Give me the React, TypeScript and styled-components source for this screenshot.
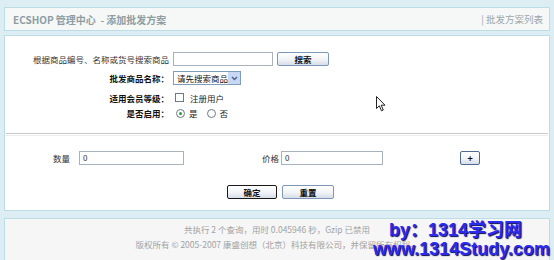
import styled, { createGlobalStyle } from "styled-components";

const GlobalStyle = createGlobalStyle`
  html, body {
    margin: 0;
    padding: 0;
    background: #dcedf4;
    font-family: "Noto Sans CJK SC", "Noto Sans", sans-serif;
    font-size: 8.5px;
    color: #222;
  }
`;

const Page = styled.div`
  position: relative;
  width: 554px;
  height: 260px;
  overflow: hidden;
  padding: 7px 4px 0;
  box-sizing: border-box;
`;

const Header = styled.div`
  height: 24px;
  box-sizing: border-box;
  border: 1px solid #bcdce6;
  background: #f6f7f7;
  display: flex;
  align-items: center;
  justify-content: space-between;
  padding: 0 6px 0 8px;
`;

const Title = styled.span`
  font-size: 10px;
  font-weight: bold;
  color: #8d9da2;
  white-space: pre;
`;

const ActionLink = styled.span`
  font-size: 9.5px;
  color: #9aa7ab;
  white-space: pre;
`;

const Main = styled.div`
  margin-top: 4px;
  background: #fff;
  border: 1px solid #bcdce6;
  padding: 14px 0 11px;
`;

const FormGrid = styled.div`
  display: grid;
  grid-template-columns: 164px 1fr;
  column-gap: 4px;
`;

const Label = styled.div<{ $bold?: boolean; $h: number }>`
  height: ${(p) => p.$h}px;
  display: flex;
  align-items: center;
  justify-content: flex-end;
  font-weight: ${(p) => (p.$bold ? "bold" : "normal")};
  color: ${(p) => (p.$bold ? "#111" : "#333")};
  white-space: nowrap;
`;

const Cell = styled.div<{ $h: number }>`
  height: ${(p) => p.$h}px;
  display: flex;
  align-items: center;
  gap: 4px;
`;

const TextInput = styled.div<{ $w: number }>`
  width: ${(p) => p.$w}px;
  flex: none;
  height: 14px;
  box-sizing: border-box;
  border: 1px solid #a7b2bb;
  background: #fff;
  font-size: 8px;
  line-height: 12px;
  padding-left: 3px;
  color: #333;
`;

const Button = styled.div<{ $w: number; $dark?: boolean }>`
  width: ${(p) => p.$w}px;
  flex: none;
  height: 14px;
  box-sizing: border-box;
  border: 1px solid ${(p) => (p.$dark ? "#1a1a1a" : "#7d97b8")};
  border-radius: 2px;
  background: linear-gradient(#ffffff 0%, #f1f3f6 55%, #d6dde8 100%);
  display: flex;
  align-items: center;
  justify-content: center;
  font-weight: bold;
  font-size: 8.5px;
  color: #111;
`;

const Select = styled.div`
  width: 68px;
  height: 14px;
  box-sizing: border-box;
  border: 1px solid #7f9db9;
  display: flex;
  align-items: center;
  justify-content: space-between;
  padding-left: 3px;
  font-size: 8.5px;
  color: #111;
`;

const SelectArrow = styled.div`
  width: 12px;
  height: 12px;
  background: #c8d7f4;
  display: flex;
  align-items: center;
  justify-content: center;
`;

const CheckBox = styled.span`
  width: 9px;
  height: 9px;
  box-sizing: border-box;
  border: 1px solid #6d7a86;
  background: #fff;
  margin-left: 2px;
  margin-right: 2px;
`;

const Radio = styled.span<{ $checked?: boolean }>`
  width: 9px;
  height: 9px;
  box-sizing: border-box;
  border: 1px solid #6d7a86;
  border-radius: 50%;
  background: #fff;
  display: flex;
  align-items: center;
  justify-content: center;
  margin-left: 3px;
  &::after {
    content: "";
    width: 3px;
    height: 3px;
    border-radius: 50%;
    background: ${(p) => (p.$checked ? "#2f9b2f" : "transparent")};
  }
`;

const OptionText = styled.span<{ $gap?: number }>`
  margin-right: ${(p) => p.$gap ?? 0}px;
  color: #222;
`;

const Separator = styled.div`
  margin: 14px 1px 0;
  height: 1px;
  border-top: 1px solid #c9c9c9;
  border-bottom: 1px solid #ececec;
`;

const PriceRow = styled.div`
  margin-top: 15px;
  height: 14px;
  display: flex;
  align-items: center;
  padding-left: 48px;
`;

const FieldLabel = styled.span<{ $ml?: number }>`
  margin-left: ${(p) => p.$ml ?? 0}px;
  margin-right: ${(p) => (p.$ml ? 2 : 9)}px;
  color: #333;
`;

const PlusButton = styled(Button)`
  margin-left: 77px;
  border-color: #4d6b8f;
  font-size: 9px;
`;

const ButtonRow = styled.div`
  margin-top: 20px;
  display: flex;
  justify-content: center;
  gap: 5px;
  padding-left: 7px;
`;

const Footer = styled.div`
  margin-top: 7px;
  border: 1px solid #bcdce6;
  background: #f6f6f6;
  padding-top: 3px;
  height: 60px;
  text-align: center;
  color: #a2a2a2;
  line-height: 15px;
`;

const Watermark = styled.div`
  position: absolute;
  right: 4px;
  font-family: "Liberation Sans", "Noto Sans CJK SC", sans-serif;
  font-weight: bold;
  color: #2a2af2;
  text-shadow: 1px 1px 1px #0b0b50;
  white-space: nowrap;
  line-height: 1;
`;

const Cursor = styled.svg`
  position: absolute;
  left: 376px;
  top: 96px;
`;

export default function App() {
  return (
    <>
      <GlobalStyle />
      <Page>
        <Header>
          <Title>{"ECSHOP 管理中心  - 添加批发方案"}</Title>
          <ActionLink>{"| 批发方案列表"}</ActionLink>
        </Header>
        <Main>
          <FormGrid>
            <Label $h={18}>根据商品编号、名称或货号搜索商品</Label>
            <Cell $h={18}>
              <TextInput $w={100} />
              <Button $w={52}>搜索</Button>
            </Cell>
            <Label $h={20} $bold>批发商品名称：</Label>
            <Cell $h={20}>
              <Select>
                请先搜索商品
                <SelectArrow>
                  <svg width="7" height="5" viewBox="0 0 7 5">
                    <path d="M1 1 L3.5 3.5 L6 1" fill="none" stroke="#4d6185" strokeWidth="1.4" />
                  </svg>
                </SelectArrow>
              </Select>
            </Cell>
            <Label $h={19} $bold>适用会员等级：</Label>
            <Cell $h={19}>
              <CheckBox />
              <OptionText>注册用户</OptionText>
            </Cell>
            <Label $h={12} $bold>是否启用：</Label>
            <Cell $h={12}>
              <Radio $checked />
              <OptionText $gap={2}>是</OptionText>
              <Radio />
              <OptionText>否</OptionText>
            </Cell>
          </FormGrid>
          <Separator />
          <PriceRow>
            <FieldLabel>数量</FieldLabel>
            <TextInput $w={105}>0</TextInput>
            <FieldLabel $ml={78}>价格</FieldLabel>
            <TextInput $w={102}>0</TextInput>
            <PlusButton $w={20}>+</PlusButton>
          </PriceRow>
          <ButtonRow>
            <Button $w={50} $dark>确定</Button>
            <Button $w={52}>重置</Button>
          </ButtonRow>
        </Main>
        <Footer>
          <div>共执行 2 个查询，用时 0.045946 秒，Gzip 已禁用</div>
          <div>版权所有 © 2005-2007 康盛创想（北京）科技有限公司，并保留所有权利。</div>
        </Footer>
        <Watermark style={{ top: 221, right: 32, fontSize: 18 }}>by：1314学习网</Watermark>
        <Watermark style={{ top: 240, fontSize: 18 }}>www.1314Study.com</Watermark>
        <Cursor width="10" height="16" viewBox="0 0 10 16">
          <path
            d="M0.5 0.5 L0.5 12.5 L3.3 9.8 L5.5 14.8 L7.3 14 L5.2 9.2 L9 9.2 Z"
            fill="#fff"
            stroke="#222"
            strokeWidth="1"
          />
        </Cursor>
      </Page>
    </>
  );
}
